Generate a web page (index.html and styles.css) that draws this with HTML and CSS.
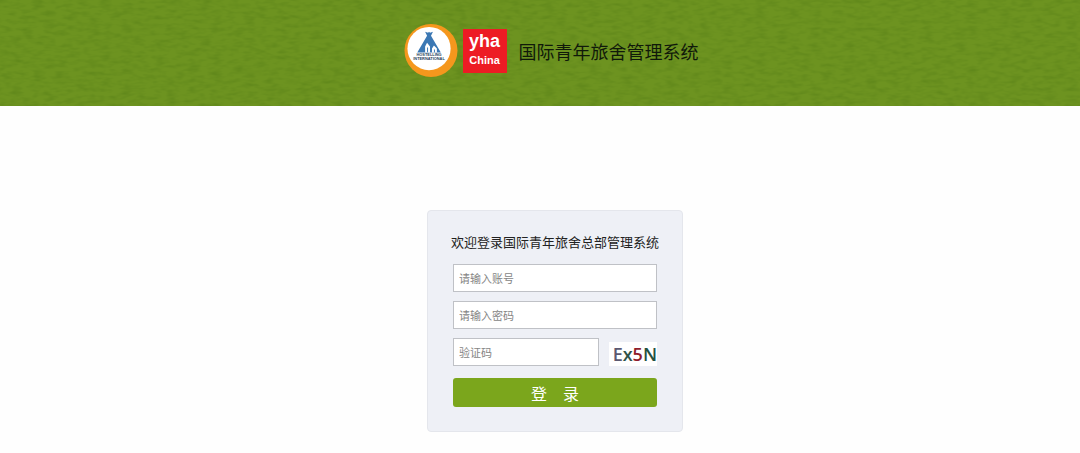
FILE: index.html
```html
<!DOCTYPE html>
<html lang="zh-CN">
<head>
    <meta charset="UTF-8">
    <meta name="viewport" content="width=device-width, initial-scale=1.0">
    <title>国际青年旅舍管理系统</title>
    <link rel="stylesheet" href="styles.css">
</head>
<body>

<header class="header">
    <svg class="texture" aria-hidden="true">
        <filter id="grain" x="0" y="0" width="100%" height="100%" color-interpolation-filters="sRGB">
            <feTurbulence type="fractalNoise" baseFrequency="0.09 0.25" numOctaves="2" seed="4"/>
            <feColorMatrix values="0 0 0 0 0.32  0 0 0 0 0.48  0 0 0 0 0.08  0.9 0 0 0 -0.36"/>
        </filter>
        <rect width="100%" height="100%" filter="url(#grain)"/>
    </svg>
    <div class="brand">
        <svg class="logo-hi" viewBox="0 0 54 54" role="img" aria-label="Hostelling International">
            <circle cx="27" cy="27" r="27" fill="#f5971d"/>
            <circle cx="25" cy="25" r="22" fill="#fff"/>
            <path d="M21 8l3 1 1-1 1 1 3-1-2 4 10 17h-24l10-17z" fill="#3b78b4"/>
            <path d="M21 29v-6l2-4 3 4v6h-2v-5h-1v5z" fill="#fff"/>
            <path d="M28 29v-4l2-3 3 3v4h-2v-3h-1v3z" fill="#fff"/>
            <text x="25" y="33" class="logo-small">HOSTELLING</text>
            <text x="25" y="37" class="logo-small">INTERNATIONAL</text>
        </svg>
        <div class="logo-yha">
            <span class="yha">yha</span>
            <span class="china">China</span>
        </div>
        <h1>国际青年旅舍管理系统</h1>
    </div>
</header>

<main class="main">
    <form class="login">
        <h2>欢迎登录国际青年旅舍总部管理系统</h2>
        <input type="text" id="account" aria-label="账号" placeholder="请输入账号">
        <input type="password" id="password" aria-label="密码" placeholder="请输入密码">
        <div class="code-row">
            <input type="text" id="code" aria-label="验证码" placeholder="验证码">
            <div class="captcha"><span class="c1">E</span><span class="c2">x</span><span class="c3">5</span><span class="c4">N</span></div>
        </div>
        <button type="submit">登　录</button>
    </form>
</main>

</body>
</html>
```
FILE: styles.css
```css
body {
    margin: 0;
    background: #fefefe;
    font-family: "Noto Sans CJK SC", sans-serif;
}
.header {
    position: relative;
    display: flex;
    justify-content: center;
    padding: 24px 0 29px 22px;
    background: #6d9320;
}
.texture {
    position: absolute;
    top: 0;
    left: 0;
    width: 100%;
    height: 100%;
}
.brand {
    position: relative;
    display: flex;
    align-items: center;
}
.logo-hi {
    width: 54px;
    height: 53px;
    margin-right: 5px;
}
.logo-small {
    font: bold 4px "Liberation Sans", sans-serif;
    text-anchor: middle;
    fill: #28425c;
}
.logo-yha {
    display: flex;
    flex-direction: column;
    align-items: center;
    width: 44px;
    height: 44px;
    margin-right: 12px;
    background: #ed1c24;
    color: #fff;
    font-family: "Liberation Sans", sans-serif;
    font-weight: bold;
}
.yha {
    font-size: 18px;
    line-height: 25px;
}
.china {
    font-size: 11px;
    line-height: 13px;
}
h1 {
    margin: 0;
    color: #10190a;
    font-size: 18px;
    font-weight: 400;
    line-height: 26px;
}
.main {
    display: flex;
    justify-content: center;
    padding: 104px 0 20px 30px;
}
.login {
    display: flex;
    flex-direction: column;
    box-sizing: border-box;
    width: 256px;
    padding: 20px 25px 24px;
    background: #eef0f6;
    border: 1px solid #e4e6ec;
    border-radius: 4px;
}
h2 {
    align-self: center;
    margin: 0 0 11px;
    color: #222;
    font-size: 13px;
    font-weight: 400;
    line-height: 22px;
    white-space: nowrap;
}
input {
    box-sizing: border-box;
    width: 100%;
    height: 28px;
    margin: 0 0 9px;
    padding: 0 5px;
    border: 1px solid #bfc1c6;
    background: #fff;
    font-family: inherit;
    font-size: 11px;
}
input::placeholder {
    color: #858585;
}
.code-row {
    display: flex;
    align-items: flex-start;
    margin-bottom: 3px;
}
.code-row input {
    flex: 1;
    min-width: 0;
    margin-right: 10px;
}
.captcha {
    width: 48px;
    margin-top: 4px;
    background: #fff;
    font-family: "Open Sans", sans-serif;
    font-size: 18px;
    font-weight: 600;
    line-height: 24px;
    text-align: right;
}
.c1 {
    color: #5b5870;
}
.c2 {
    color: #2f5348;
}
.c3 {
    color: #8e1c2c;
}
.c4 {
    color: #24503f;
}
button {
    height: 29px;
    padding: 0;
    border: none;
    border-radius: 3px;
    background: #7ba61c;
    color: #fff;
    font-family: inherit;
    font-size: 16px;
    cursor: pointer;
}
```
